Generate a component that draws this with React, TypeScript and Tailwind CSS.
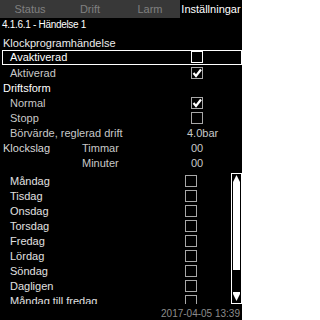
import React from 'react';

type CheckProps = { checked?: boolean; active?: boolean };

function Check({ checked, active }: CheckProps) {
    return (
        <div
            className={`w-[12px] h-[12px] mt-[1px] border flex items-center justify-center ${
                active ? 'border-white' : 'border-[#a8a8a8]'
            }`}
        >
            {checked && (
                <svg width="10" height="10" viewBox="0 0 10 10">
                    <polyline points="1.5,5 4,8 9,1.5" fill="none" stroke="#ffffff" strokeWidth="2.2" />
                </svg>
            )}
        </div>
    );
}

function Row({ label, children }: { label: string; children?: React.ReactNode }) {
    return (
        <div className="flex h-[15px]">
            <span className="w-[191px] pl-[10px] text-[#c8c8c8]">{label}</span>
            {children}
        </div>
    );
}

function Heading({ label }: { label: string }) {
    return <div className="h-[15px] pl-[3px] text-white">{label}</div>;
}

function ScrollBar() {
    return (
        <svg width="11" height="131" viewBox="0 0 11 131" className="shrink-0">
            <rect x="0.5" y="0.5" width="10" height="130" fill="none" stroke="#ffffff" />
            <polygon points="5.5,2 2,9 9,9" fill="#ffffff" />
            <rect x="2" y="9" width="7" height="88" fill="#ffffff" />
            <rect x="2" y="119" width="7" height="2" fill="#ffffff" />
            <polygon points="2,121 9,121 5.5,128" fill="#ffffff" />
        </svg>
    );
}

const days = [
    'Måndag',
    'Tisdag',
    'Onsdag',
    'Torsdag',
    'Fredag',
    'Lördag',
    'Söndag',
    'Dagligen',
    'Måndag till fredag',
];

export default function App() {
    return (
        <div className="w-[242px] h-[320px] bg-black overflow-hidden flex flex-col text-[11px] leading-[15px] font-['Liberation_Sans',Arial,sans-serif]">
            {/* tabs */}
            <div className="flex h-[18px] leading-[18px] shrink-0">
                <div className="w-[60px] bg-[#383838] text-[#808080] text-center">Status</div>
                <div className="w-[60px] bg-[#383838] text-[#808080] text-center">Drift</div>
                <div className="w-[60px] bg-[#383838] text-[#808080] text-center">Larm</div>
                <div className="w-[62px] bg-black text-white text-center">Inställningar</div>
            </div>

            <div className="h-[18px] pl-[2px] text-[10px] leading-[14px] tracking-[-0.3px] text-white shrink-0">
                4.1.6.1 - Händelse 1
            </div>

            <div className="h-[14px] pl-[3px] text-[#ececec] shrink-0">Klockprogramhändelse</div>

            {/* selected row */}
            <div className="ml-[2px] w-[240px] h-[15px] border border-white flex shrink-0">
                <span className="w-[188px] pl-[7px] text-white leading-[15px] -mt-[1px]">Avaktiverad</span>
                <div className="-mt-[1px]">
                    <Check active />
                </div>
            </div>

            <div className="mt-[1px] shrink-0">
                <Row label="Aktiverad">
                    <Check checked />
                </Row>
                <Heading label="Driftsform" />
                <Row label="Normal">
                    <Check checked />
                </Row>
                <Row label="Stopp">
                    <Check />
                </Row>
                <div className="flex h-[15px] text-[#c8c8c8]">
                    <span className="w-[187px] pl-[10px]">Börvärde, reglerad drift</span>
                    <span>4.0bar</span>
                </div>
                <div className="flex h-[15px] text-[#c8c8c8]">
                    <span className="w-[82px] pl-[3px] text-[#d8d8d8]">Klockslag</span>
                    <span className="w-[109px]">Timmar</span>
                    <span>00</span>
                </div>
                <div className="flex h-[15px] text-[#c8c8c8]">
                    <span className="w-[82px]" />
                    <span className="w-[109px]">Minuter</span>
                    <span>00</span>
                </div>
            </div>

            {/* day list */}
            <div className="mt-[2px] h-[131px] flex shrink-0 overflow-hidden">
                <div className="w-[231px] pt-[1px] overflow-hidden">
                    {days.map((d) => (
                        <div key={d} className="flex h-[15px]">
                            <span className="w-[185px] pl-[10px] text-[#e0e0e0] whitespace-nowrap">{d}</span>
                            <Check />
                        </div>
                    ))}
                </div>
                <ScrollBar />
            </div>

            <div className="mt-[3px] pr-[2px] text-right text-[10px] leading-[14px] text-[#8c8c8c]">
                2017-04-05 13:39
            </div>
        </div>
    );
}
